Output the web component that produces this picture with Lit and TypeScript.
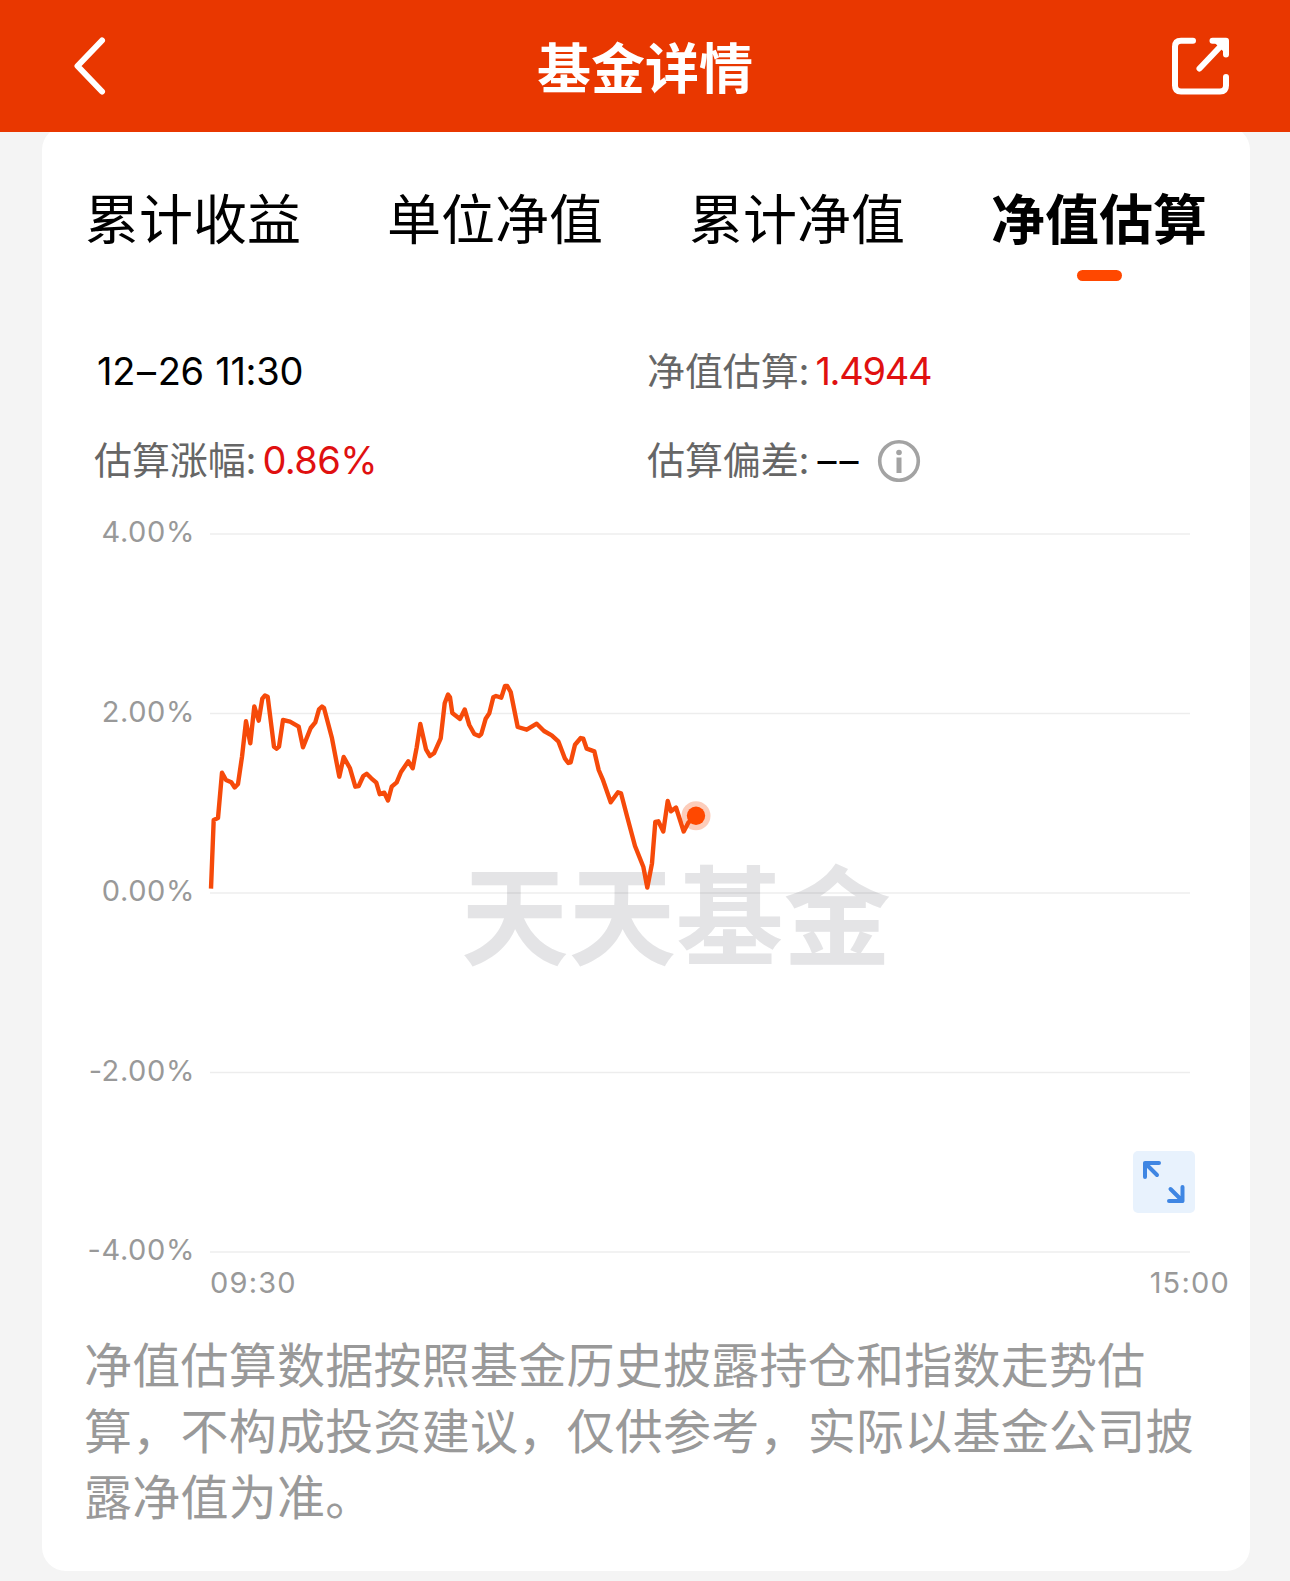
import { LitElement, html, svg, css } from "lit";
import { customElement, property } from "lit/decorators.js";

const SERIES: number[][] = [
  [211, 888.7], [213.7, 820], [218, 818], [222, 772.7], [226, 780], [231.3, 782.3], [234.7, 787.5], [238, 784],
  [242, 756.7], [246, 721.3], [250.3, 743.3], [254.3, 706.5], [258.7, 720.7], [262.3, 698.7], [265, 695.5],
  [267.7, 696.7], [274, 746.7], [276.7, 748.7], [279, 746.7], [283, 720], [290, 721.7], [298.7, 726.7],
  [303, 747.3], [310.7, 728], [315.3, 722.3], [319, 709.3], [322, 706.5], [324, 708], [332, 738.3], [339.3, 776.7],
  [343.7, 757], [350, 768.3], [355.3, 786.7], [358.7, 786], [363.3, 776], [366.7, 773.7], [371.3, 778.3],
  [376.3, 782.7], [379.7, 794.2], [384.3, 792.7], [388, 800.5], [391.7, 786.7], [396.7, 782.3], [401, 772],
  [408.3, 761.3], [412.7, 768.3], [416.7, 747.3], [420.3, 724], [426, 749.3], [430, 756], [434, 753.3],
  [440.7, 738.3], [444.7, 703.3], [448, 694.5], [450, 697.3], [452.3, 713], [460, 719], [464.7, 709.5],
  [469.3, 725], [474.3, 734], [479, 736], [481.3, 734], [485.7, 718.7], [489.3, 713.3], [493.3, 697.3], [496, 696],
  [501.3, 697.7], [505, 686], [507.3, 686], [510.7, 692], [517.7, 727], [526.7, 729.7], [536.7, 723.7], [544, 731],
  [551.7, 735.3], [558.3, 741.3], [565, 758.7], [568.3, 763], [570.7, 762.3], [575, 744.7], [580.7, 738],
  [583.3, 738.7], [586.7, 748.7], [594.3, 751.3], [598.7, 770], [602.7, 779.3], [610.7, 802.3], [618, 792.3],
  [621, 793.3], [627.3, 817.3], [635, 846], [643.3, 866.7], [647.3, 887.5], [652, 863.3], [655.3, 822],
  [658.3, 821.3], [663.3, 831.5], [667.7, 801], [671, 811.3], [676, 807.5], [683.7, 831.5], [688.3, 822.7],
  [696, 815.7],
];

const base = css`
  :host {
    display: block;
    font-family: Inter, "Noto Sans CJK SC", sans-serif;
  }
  * { box-sizing: border-box; }
  svg { display: block; }
`;

@customElement("nav-header")
export class NavHeader extends LitElement {
  static styles = [base, css`
    .bar {
      height: 132px;
      padding: 0 58px 0 71px;
      display: grid;
      grid-template-columns: 64px 1fr 64px;
      align-items: center;
      background: #e93700;
      color: #fff;
    }
    .title {
      margin: 0;
      padding: 7px 13px 0 0;
      text-align: center;
      font-size: 54px;
      line-height: 64px;
      font-weight: 700;
    }
    .icon {
      fill: none;
      stroke: #fff;
      stroke-width: 6;
      stroke-linecap: round;
      stroke-linejoin: round;
    }
    .share { justify-self: end; }
  `];
  render() {
    return html`
      <header class="bar">
        <svg class="icon" width="40" height="64" viewBox="0 0 40 64"><path d="M31 6.5 6.5 32 31 57.5" /></svg>
        <h1 class="title">基金详情</h1>
        <svg class="icon share" width="64" height="64" viewBox="0 0 64 64">
          <path d="M25 6.8H13Q7 6.800 7 12.8V51.5Q7 57.5 13 57.5H52Q58 57.5 58 51.500V43M44.500 6.8H58V20.5M55 9.8 31.5 34.5" />
          <path d="M50 8H57V15Z" />
        </svg>
      </header>`;
  }
}

@customElement("fund-tabs")
export class FundTabs extends LitElement {
  @property({ type: Number }) active = 3;
  static styles = [base, css`
    .tabs {
      display: flex;
      justify-content: space-between;
      padding: 61px 43px 0 43px;
    }
    .tab {
      display: flex;
      flex-direction: column;
      align-items: center;
      gap: 15px;
      font-size: 54px;
      line-height: 68px;
      color: #000;
    }
    .tab.on { font-weight: 700; }
    .tab.on::after {
      content: "";
      width: 45px;
      height: 11px;
      border-radius: 5.5px;
      background: #ff4800;
    }
  `];
  render() {
    const names = ["累计收益", "单位净值", "累计净值", "净值估算"];
    return html`<nav class="tabs">
      ${names.map((n, i) => html`<span class="tab ${i === this.active ? "on" : ""}">${n}</span>`)}
    </nav>`;
  }
}

@customElement("estimate-info")
export class EstimateInfo extends LitElement {
  static styles = [base, css`
    .grid {
      display: grid;
      grid-template-columns: 553px 1fr;
      grid-auto-rows: 89px;
      align-items: center;
      padding: 45px 0 0 52px;
      font-size: 38px;
      color: #666;
    }
    .cell {
      display: flex;
      align-items: center;
      line-height: 50px;
      white-space: nowrap;
    }
    .label { letter-spacing: -0.1px; }
    .time { color: #000; padding-left: 3px; letter-spacing: -0.3px; word-spacing: 1px; }
    .sep { margin: 0 2px; }
    .value { color: #e01010; margin-left: 6px; letter-spacing: -0.6px; }
    .num { letter-spacing: -1.3px; }
    .dash { color: #000; margin-left: 8px; letter-spacing: 3px; }
    .info { margin-left: 16px; }
  `];
  render() {
    return html`<div class="grid">
      <div class="cell"><span class="time">12<span class="sep">–</span>26 11:30</span></div>
      <div class="cell"><span class="label">净值估算:</span><span class="value num">1.4944</span></div>
      <div class="cell"><span class="label">估算涨幅:</span><span class="value">0.86%</span></div>
      <div class="cell">
        <span class="label">估算偏差:</span><span class="dash">––</span>
        <svg class="info" width="44" height="44" viewBox="0 0 44 44">
          <circle cx="22" cy="23" r="19.3" fill="none" stroke="#a3a3a3" stroke-width="3.6" />
          <circle cx="22" cy="14.5" r="2.8" fill="#a3a3a3" />
          <path d="M22 19.5V35" stroke="#a3a3a3" stroke-width="5" />
        </svg>
      </div>
    </div>`;
  }
}

@customElement("estimate-chart")
export class EstimateChart extends LitElement {
  static styles = [base, css`
    .chart {
      position: relative;
      height: 816px;
      padding-top: 10px;
      font-size: 29px;
      line-height: 36px;
      color: #999;
    }
    .body {
      display: grid;
      grid-template-columns: 152px 1fr;
      column-gap: 11px;
    }
    .ylabels {
      display: flex;
      flex-direction: column;
      justify-content: space-between;
      height: 754px;
      text-align: right;
      letter-spacing: 0.6px;
    }
    .ylabels span { margin-right: -1px; }
    .plot { margin-top: 10px; }
    .xlabels {
      display: flex;
      justify-content: space-between;
      padding: 0 20px 0 168px;
      margin-top: -3px;
      letter-spacing: 1.2px;
    }
    .mark {
      font-family: "Noto Sans CJK SC", sans-serif;
      font-size: 107.5px;
      font-weight: 700;
      fill: #e4e4e6;
    }
    .expand {
      position: absolute;
      right: 55px;
      top: 647px;
    }
  `];
  render() {
    return html`<div class="chart">
      <div class="body">
        <div class="ylabels">
          ${["4.00%", "2.00%", "0.00%", "-2.00%", "-4.00%"].map((t) => html`<span>${t}</span>`)}
        </div>
        <svg class="plot" width="1000" height="738" viewBox="205 524 1000 738">
          <text class="mark" x="461" y="957">天天基金</text>
          ${[534, 713.5, 893, 1072.5, 1252].map((y) => svg`<path d="M210 ${y}H1190" stroke="#000" stroke-opacity="0.07" stroke-width="1.6" />`)}
          <polyline points=${SERIES.map((p) => p.join(",")).join(" ")} fill="none" stroke="#f64a0a" stroke-width="4.4" stroke-linejoin="round" />
          <circle cx="696" cy="815.7" r="14.5" fill="#f64a0a" fill-opacity="0.28" />
          <circle cx="696" cy="815.7" r="9.2" fill="#ff4800" />
        </svg>
      </div>
      <div class="xlabels"><span>09:30</span><span>15:00</span></div>
      <svg class="expand" width="62" height="62" viewBox="0 0 62 62">
        <rect width="62" height="62" rx="5" fill="#e8f2fd" />
        <path d="M26 12H12V26M12 12 24 24M49.5 36V50H36M49.5 50 37.5 38" fill="none" stroke="#3f86e3" stroke-width="4" stroke-linecap="round" stroke-linejoin="round" />
      </svg>
    </div>`;
  }
}

@customElement("app-root")
export class AppRoot extends LitElement {
  static styles = [base, css`
    :host {
      height: 1581px;
      background: #f4f4f4;
      overflow: hidden;
    }
    .head { position: relative; z-index: 1; }
    .card {
      margin: -6px 40px 0 42px;
      height: 1445px;
      border-radius: 24px;
      background: #fff;
    }
    .note {
      margin: 0;
      padding: 9px 40px 0 42px;
      font-family: "Noto Sans CJK SC", sans-serif;
      font-size: 48px;
      letter-spacing: 0.25px;
      line-height: 66px;
      color: #999;
    }
  `];
  render() {
    return html`
      <nav-header class="head"></nav-header>
      <main class="card">
        <fund-tabs></fund-tabs>
        <estimate-info></estimate-info>
        <estimate-chart></estimate-chart>
        <p class="note">净值估算数据按照基金历史披露持仓和指数走势估<br />算，不构成投资建议，仅供参考，实际以基金公司披<br />露净值为准。</p>
      </main>`;
  }
}
